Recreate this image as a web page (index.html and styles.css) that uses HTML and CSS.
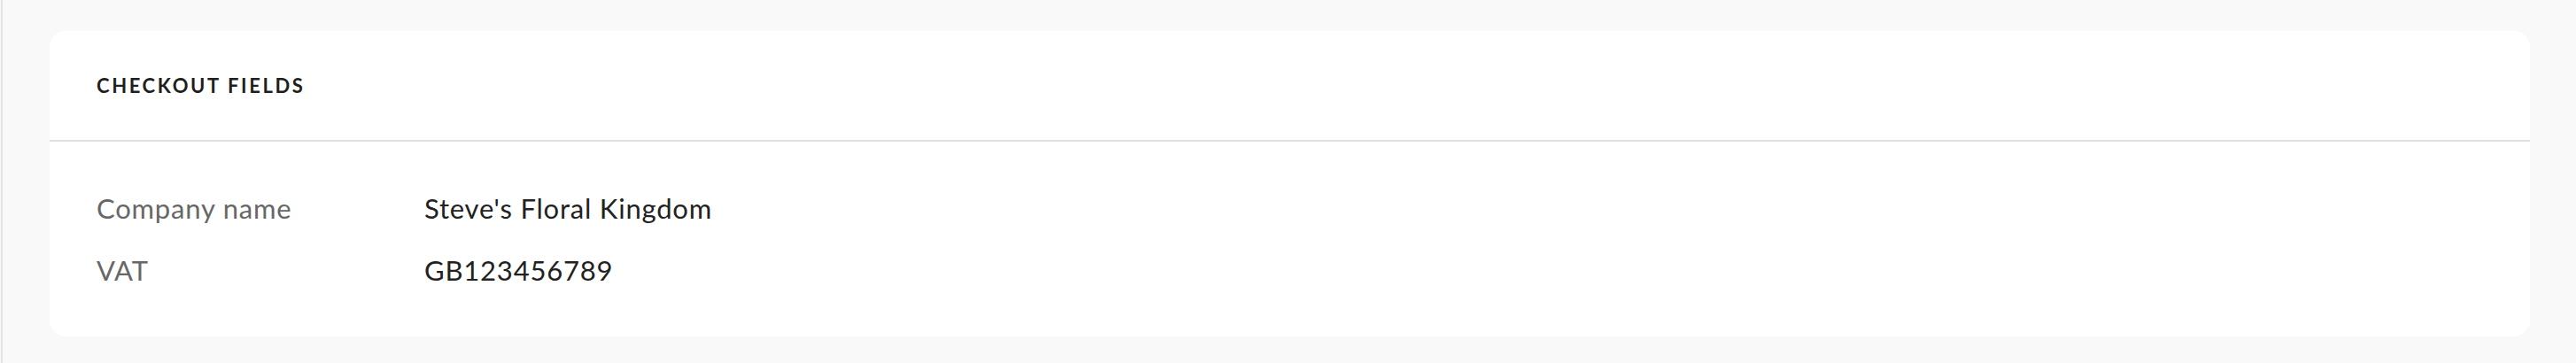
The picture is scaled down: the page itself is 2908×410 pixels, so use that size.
FILE: index.html
```html
<!DOCTYPE html>
<html lang="en">
<head>
  <meta charset="UTF-8">
  <title>Checkout fields</title>
  <meta name="viewport" content="width=device-width, initial-scale=1.0">
  <link rel="stylesheet" href="styles.css">
</head>
<body>
  <div class="page">
    <div class="card">
      <div class="card-header">
        <h4>Checkout fields</h4>
      </div>
      <div class="card-body">
        <div class="field-row">
          <span class="field-label">Company name</span>
          <span class="field-value">Steve's Floral Kingdom</span>
        </div>
        <div class="field-row">
          <span class="field-label">VAT</span>
          <span class="field-value">GB123456789</span>
        </div>
      </div>
    </div>
  </div>
</body>
</html>
```

FILE: styles.css
```css
* { margin: 0; padding: 0; box-sizing: border-box; }
html, body {
  font-family: Lato, 'Open Sans', sans-serif;
  background-color: #f9f9f9;
  height: 100%;
}
.page {
  margin-left: 1px;
  border-left: 2px solid #e4e4e4;
  min-height: 100%;
  padding: 35px 52px 30px 53px;
}
.card {
  background-color: #fff;
  border-radius: 18px;
}
.card-header {
  height: 125px;
  display: flex;
  align-items: center;
  padding: 0 53px;
  border-bottom: 2px solid #e0e0e0;
}
.card-header h4 {
  font-size: 22px;
  font-weight: 700;
  letter-spacing: 2.6px;
  text-transform: uppercase;
  color: #1f1f1f;
}
.card-body {
  padding: 55px 53px;
  display: flex;
  flex-direction: column;
  gap: 30px;
}
.field-row {
  display: flex;
  font-size: 31px;
  line-height: 40px;
  letter-spacing: 0.8px;
}
.field-label {
  width: 370px;
  flex-shrink: 0;
  color: #676767;
}
.field-value {
  color: #222;
}
```
